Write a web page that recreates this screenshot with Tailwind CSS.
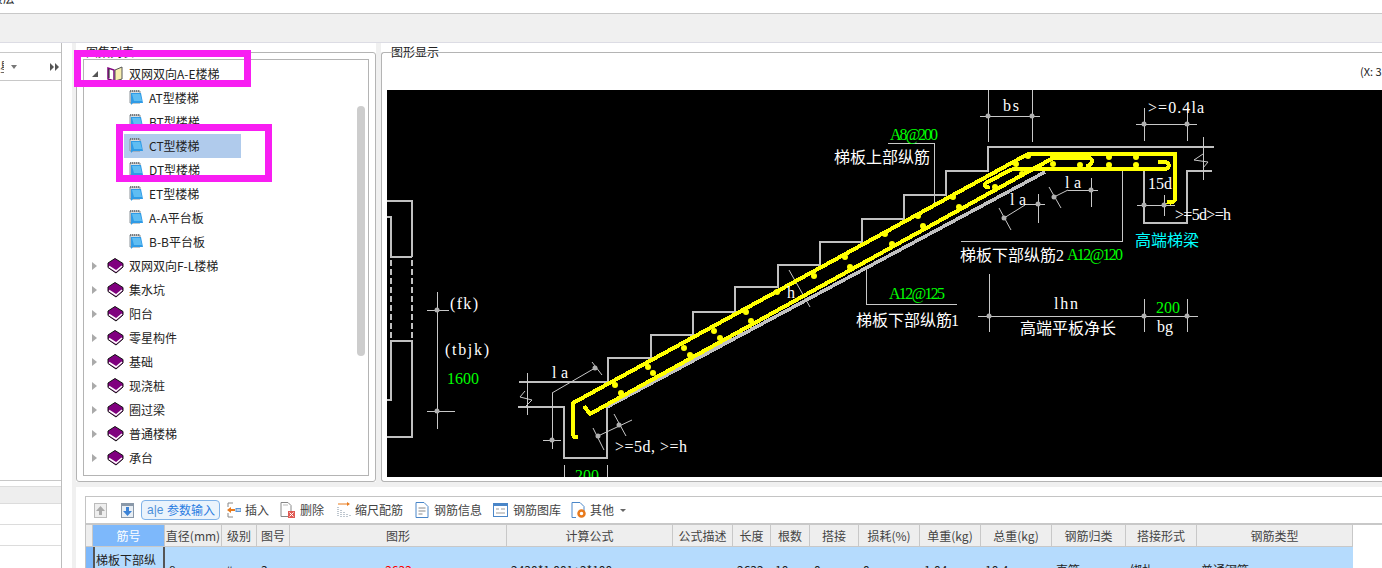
<!DOCTYPE html>
<html lang="zh-CN">
<head>
  <meta charset="UTF-8">
  <title>图集列表</title>
  <script src="https://cdn.jsdelivr.net/npm/@tailwindcss/browser@4"></script>
</head>
<body class="w-[1382px] h-[568px] overflow-hidden bg-white text-[12px] leading-none text-[#222] font-['Noto_Sans_CJK_SC','Liberation_Sans',sans-serif]">
  <svg class="hidden">
    <symbol id="book" viewBox="0 0 17 16">
      <path d="M1 5 8 .5 16 5.500V9l-7 6-8-5.500z" fill="#80007f" stroke="#111" stroke-width="1"/>
      <path d="M2 8.500 9 13l6-5" fill="none" stroke="#fff" stroke-width="1.500"/>
    </symbol>
    <symbol id="openbook" viewBox="0 0 17 16">
      <path d="M1 2v11l6 2V4z" fill="#fff" stroke="#80007f" stroke-width="1.500"/>
      <path d="M8 4v11l7-2V1z" fill="#f7eeb0" stroke="#555" stroke-width="1"/>
      <path d="M2 3v9" stroke="#111" stroke-width="1"/>
    </symbol>
    <symbol id="page" viewBox="0 0 15 16">
      <path d="M1 1h10v12H1z" fill="#d8dde0" stroke="#8a9298" stroke-width="1"/>
      <path d="M2 3h10l2 10H4l-2 2z" fill="#2f9be6"/>
      <path d="M3 4h8l2 7H5z" fill="#5fbdf2"/>
      <path d="M1 1h9" stroke="#666" stroke-dasharray="1 1" stroke-width="1.500"/>
    </symbol>
  </svg>

  <header class="h-[14px] overflow-hidden border-b border-[#c8c8c8] flex gap-[9px]">
    <span class="-ml-[9px] -mt-[8px] text-[12px] leading-[12px]">楼层</span>
    <span class="-mt-[8px] leading-[12px]">·</span>
  </header>
  <div class="h-[29px] bg-[#f0f0f0] border-b border-[#dcdce4]"></div>

  <div class="flex h-[525px]">
    <!-- left list -->
    <aside class="w-[62px] shrink-0 flex flex-col border-r border-[#bdbdbd] pt-[9px]">
      <div class="h-[28px] border-t border-[#c8c8c8] flex items-center text-[#444]">
        <span class="w-[4px] overflow-hidden">星</span>
        <span class="ml-[7px] w-0 h-0 border-x-[3px] border-x-transparent border-t-[4px] border-t-[#777]"></span>
        <span class="ml-[33px] w-0 h-0 border-y-[4px] border-y-transparent border-l-[4px] border-l-[#555]"></span>
        <span class="ml-[1px] w-0 h-0 border-y-[4px] border-y-transparent border-l-[4px] border-l-[#555]"></span>
      </div>
      <div class="h-[401px] border-t border-[#c8c8c8] border-b"></div>
      <div class="h-[5px]"></div>
      <div class="h-[17px] bg-[#eeeeee] border-t border-[#dcdcdc]"></div>
      <div class="h-[21px] border-t border-[#dcdcdc]"></div>
      <div class="h-[21px] border-t border-[#dcdcdc]"></div>
      <div class="flex-1 border-t border-[#dcdcdc]"></div>
    </aside>
    <div class="w-[10px] shrink-0"></div>

    <div class="flex-1 flex flex-col bg-[#f0f0f0] pl-[4px]">
      <div class="h-[439px] flex gap-[5px] shrink-0">
        <!-- tree group -->
        <section class="relative w-[300px] shrink-0 bg-white pt-[9px]">
          <span class="absolute left-[9px] top-[2px] px-[1px] bg-white text-[12px] leading-[14px]">图集列表</span>
          <div class="h-[430px] border border-[#b4b4b4] rounded-[3px] pl-[6px] pr-[6px] pt-[6px] pb-[6px]">
            <div class="relative h-[417px] border border-[#b4b4b4] overflow-hidden">
              <ul id="tree" class="pt-[2px]"></ul>
              <div class="absolute right-[3px] top-[46px] w-[8px] h-[250px] rounded-full bg-[#cdcdcd]"></div>
            </div>
          </div>
        </section>
        <!-- drawing group -->
        <section class="relative flex-1 bg-white pt-[9px]">
          <span class="absolute left-[9px] top-[2px] px-[1px] bg-white text-[12px] leading-[14px]">图形显示</span>
          <div class="relative h-[430px] border border-[#b4b4b4] border-r-0 rounded-l-[3px] pl-[5px] pt-[37px]">
            <span class="absolute left-[978px] top-[12px] text-[11px] leading-[13px]">(X: 3</span>
            <svg class="block font-['Liberation_Serif','Noto_Sans_CJK_SC',serif]" width="995" height="387" viewBox="387 90 995 387">
              <rect x="387" y="90" width="995" height="387" fill="#000"/>
              <g fill="none" stroke="#c0c0c0" stroke-width="2" shape-rendering="crispEdges">
                <path d="M387 201H412V257M387 217H391V257H412"/>
                <path d="M391 260V340M412 260V340" stroke-dasharray="6 3"/>
                <path d="M387 400H391V341H412V437H387"/>
                <path d="M519 382H608V358H651V335H693V312H735V287H778V265H820V242H862V219H904V195H946V171H988V147H1214"/>
                <path d="M518 407H564V458H607V407"/>
                <path d="M1212 171H1187V223H1144V171"/>
                <path d="M607 407 1045 172" stroke-width="3.500"/>
              </g>
              <g fill="none" stroke="#c8c8c8" stroke-width="1" shape-rendering="crispEdges">
                <path d="M437 292V429M427 310H449M427 411H455"/>
                <path d="M527 373V415M552 393V449M543 440H561"/>
                <path d="M564 465V477M607 465V477"/>
                <path d="M988 90V142M1032 90V142M980 116H1040"/>
                <path d="M888 143H934V205"/>
                <path d="M1025 204H1045M1038 194V223M1068 190H1098M1091 178V207"/>
                <path d="M1122 167V241H961"/>
                <path d="M1144 108V141M1187 108V141M1136 124H1197"/>
                <path d="M1203 137V180"/>
                <path d="M1137 205H1175M1164 195V216"/>
                <path d="M866 268V304H957"/>
                <path d="M978 316H1198M989 274V332M1144 299V332M1187 299V332"/>
              </g>
              <g fill="none" stroke="#c8c8c8" stroke-width="1">
                <path d="M552 393 595 368M592 362 602 375M525 391l-5 6 12 3-6 6M1203 154l-9 6 14 2-5 6"/>
                <path d="M598 436 632 420M614 414 626 436M593 428 604 450"/>
                <path d="M1004 218 1025 205M999 208 1011 230M1054 197 1068 190M1049 187 1061 208"/>
                <path d="M789 270 810 307M802 295 778 309"/>
              </g>
              <g fill="#b0b0b0">
                <circle cx="437" cy="310" r="2.500"/><circle cx="437" cy="411" r="2.500"/>
                <circle cx="552" cy="440" r="2.500"/><circle cx="595" cy="368" r="2.500"/>
                <circle cx="619" cy="425" r="2.500"/><circle cx="598" cy="436" r="2.500"/>
                <circle cx="988" cy="116" r="2.500"/><circle cx="1032" cy="116" r="2.500"/>
                <circle cx="1004" cy="218" r="2.500"/><circle cx="1038" cy="204" r="2.500"/>
                <circle cx="1054" cy="197" r="2.500"/><circle cx="1091" cy="190" r="2.500"/>
                <circle cx="1144" cy="124" r="2.500"/><circle cx="1187" cy="124" r="2.500"/>
                <circle cx="1144" cy="205" r="2.500"/><circle cx="1164" cy="205" r="2.500"/>
                <circle cx="989" cy="316" r="2.500"/><circle cx="1144" cy="316" r="2.500"/><circle cx="1187" cy="316" r="2.500"/>
              </g>
              <g fill="none" stroke="#ffff00" stroke-width="4" stroke-linejoin="round" shape-rendering="crispEdges">
                <path d="M578 437C574 438 573 436 573 433V403L1028 154H1175V198C1175 203 1170 203 1167 202"/>
                <path d="M584 406 590 414 1053 158H1088C1094 158 1093 165 1086 166"/>
                <path d="M1012 169H1165C1170 168 1170 163 1165 162H1158"/>
                <path d="M1012 169 986 183C983 187 987 188 990 187"/>
              </g>
              <g fill="#ffff00">
                <circle cx="615" cy="385" r="3"/><circle cx="621" cy="393" r="3"/><circle cx="648" cy="367" r="3"/><circle cx="653" cy="373" r="3"/>
                <circle cx="684" cy="348" r="3"/><circle cx="690" cy="355" r="3"/><circle cx="714" cy="331" r="3"/><circle cx="720" cy="338" r="3"/>
                <circle cx="746" cy="312" r="3"/><circle cx="751" cy="321" r="3"/><circle cx="777" cy="292" r="3"/><circle cx="814" cy="276" r="3"/>
                <circle cx="850" cy="267" r="3"/><circle cx="845" cy="257" r="3"/><circle cx="892" cy="244" r="3"/><circle cx="885" cy="234" r="3"/>
                <circle cx="923" cy="226" r="3"/><circle cx="918" cy="216" r="3"/><circle cx="959" cy="207" r="3"/><circle cx="953" cy="197" r="3"/>
                <circle cx="995" cy="187" r="3"/><circle cx="1022" cy="174" r="3"/><circle cx="1016" cy="164" r="3"/><circle cx="1028" cy="156" r="3"/>
                <circle cx="1053" cy="157" r="3"/><circle cx="1053" cy="164" r="3"/><circle cx="1080" cy="157" r="3"/><circle cx="1080" cy="165" r="3"/>
                <circle cx="1109" cy="157" r="3"/><circle cx="1109" cy="165" r="3"/><circle cx="1136" cy="157" r="3"/><circle cx="1136" cy="165" r="3"/>
              </g>
              <g data-cad fill="#ffffff" font-size="16">
                <text x="450" y="309" textLength="28">(fk)</text>
                <text x="445" y="355" textLength="44">(tbjk)</text>
                <text x="552" y="378">la</text>
                <text x="615" y="452">&gt;=5d, &gt;=h</text>
                <text x="1003" y="111">bs</text>
                <text x="1010" y="205">la</text>
                <text x="1065" y="188">la</text>
                <text x="1148" y="113">&gt;=0.4la</text>
                <text x="1148" y="189">15d</text>
                <text x="1175" y="220">&gt;=5d&gt;=h</text>
                <text x="787" y="298">h</text>
                <text x="1054" y="309">lhn</text>
                <text x="1157" y="332">bg</text>
                <text x="1056" y="261">2</text>
                <text x="951" y="326">1</text>
              </g>
              <g fill="#ffffff" font-size="16" font-family="Noto Sans CJK SC">
                <text x="834" y="163">梯板上部纵筋</text>
                <text x="960" y="261">梯板下部纵筋</text>
                <text x="856" y="326">梯板下部纵筋</text>
                <text x="1020" y="334">高端平板净长</text>
              </g>
              <text x="1135" y="246" fill="#00ffff" font-size="16" font-family="Noto Sans CJK SC">高端梯梁</text>
              <g data-cad fill="#00ff00" font-size="16">
                <text x="447" y="384">1600</text>
                <text x="890" y="140">A8@200</text>
                <text x="1067" y="260">A12@120</text>
                <text x="889" y="299">A12@125</text>
                <text x="1156" y="313">200</text>
                <text x="575" y="481">200</text>
              </g>
            </svg>
          </div>
        </section>
      </div>

      <div class="h-[5px] shrink-0"></div>

      <!-- rebar table -->
      <section class="flex-1 bg-white pl-[9px] pt-[9px] overflow-hidden">
        <div class="h-full border-l border-t border-[#c4c4c4] flex flex-col text-[#444]">
          <div class="h-[28px] shrink-0 border-b-2 border-[#c8c8c8] flex items-center text-[12px] whitespace-nowrap">
            <svg class="ml-[8px]" width="13" height="15" viewBox="0 0 13 15"><rect x="0.500" y="0.500" width="12" height="14" fill="#eee" stroke="#bbb"/><path d="M6.500 3 11 8H8v4H5V8H2z" fill="#aaa"/></svg>
            <svg class="ml-[14px]" width="13" height="15" viewBox="0 0 13 15"><rect x="0.500" y="0.500" width="12" height="14" fill="#e8eef4" stroke="#8a98a8"/><path d="M0 0h13v3H0z" fill="#8a98a8"/><path d="M5 4h3v4h3l-4.500 5L2 8h3z" fill="#3b82d6"/></svg>
            <div class="ml-[7px] w-[79px] h-[20px] shrink-0 flex items-center gap-[6px] border border-[#7fb2e8] rounded-[4px] bg-[#eaf3fc] pl-[5px] text-[#2a7de1]">
              <span class="w-[14px] font-['Liberation_Sans'] text-[12px] text-[#4a8fd8]">a|e</span><span>参数输入</span>
            </div>
            <svg class="ml-[7px]" width="14" height="16" viewBox="0 0 14 16"><path d="M1 1h5M1 1v4M1 11v4h5" fill="none" stroke="#888"/><path d="M0 8l4-3v2h4v2H4v2z" fill="#e87a1d"/><rect x="9" y="6.500" width="5" height="3" fill="#bcd6f0" stroke="#5b95d6"/></svg>
            <span class="ml-[4px]">插入</span>
            <svg class="ml-[11px]" width="15" height="16" viewBox="0 0 15 16"><path d="M1 .5h7l3 3v11H1z" fill="#fff" stroke="#888"/><path d="M3 3h5" stroke="#bbb"/><rect x="8" y="9" width="7" height="7" fill="#e05b55"/><path d="M9.500 10.500l4 4M13.500 10.500l-4 4" stroke="#fff"/></svg>
            <span class="ml-[5px]">删除</span>
            <svg class="ml-[13px]" width="14" height="16" viewBox="0 0 14 16"><path d="M1 2h9" stroke="#e87a1d"/><path d="M10 0l3 2-3 2z" fill="#e87a1d"/><path d="M1 5v10M4 8v7M7 10v5M10 12v3M13 13v2" stroke="#7f8f9f" stroke-dasharray="1 1"/></svg>
            <span class="ml-[4px]">缩尺配筋</span>
            <svg class="ml-[12px]" width="14" height="16" viewBox="0 0 14 16"><path d="M1 .5h8l4 4v11H1z" fill="#fff" stroke="#4a86c8"/><path d="M3.500 6h7M3.500 9h7M3.500 12h4" stroke="#888"/></svg>
            <span class="ml-[5px]">钢筋信息</span>
            <svg class="ml-[11px]" width="15" height="14" viewBox="0 0 15 14"><rect x="0.500" y="0.500" width="14" height="13" fill="#fff" stroke="#4a86c8"/><rect x="0" y="0" width="15" height="3" fill="#4a86c8"/><path d="M3 6h3M8 6h4M3 10h9" stroke="#999"/></svg>
            <span class="ml-[5px]">钢筋图库</span>
            <svg class="ml-[10px]" width="15" height="16" viewBox="0 0 15 16"><path d="M1 .5h8l4 4v5M5 15.500H1V.5" fill="#fff" stroke="#4a86c8"/><circle cx="10.500" cy="11.500" r="3" fill="none" stroke="#e87a1d" stroke-width="2.500"/></svg>
            <span class="ml-[4px]">其他</span>
            <span class="ml-[6px] w-0 h-0 border-x-[3px] border-x-transparent border-t-[3px] border-t-[#666]"></span>
          </div>
          <div id="head" class="grid grid-cols-[7px_72px_57px_35px_33px_217px_166px_60px_38px_39px_49px_61px_61px_71px_74px_71px_156px] w-[1267px] h-[22px] shrink-0 bg-[#eeeeee] border-b border-[#c8c8c8]"></div>
          <div id="row" class="grid grid-cols-[7px_72px_57px_35px_33px_217px_166px_60px_38px_39px_49px_61px_61px_71px_74px_71px_156px] w-[1267px] h-[42px] shrink-0 bg-[#b5dbfd] text-[#222]"></div>
        </div>
      </section>
    </div>
  </div>

  <!-- annotation boxes drawn over the screenshot -->
  <div class="absolute left-[74px] top-[50px] w-[177px] h-[37px] border-[7px] border-[#f81ef2]"></div>
  <div class="absolute left-[116px] top-[124px] w-[156px] h-[58px] border-[7px] border-[#f81ef2]"></div>

  <script>
    // CAD labels sit on a fixed 8px character cell
    document.querySelectorAll('[data-cad] text').forEach(t => {
      if (!t.hasAttribute('textLength')) t.setAttribute('textLength', t.textContent.length * 8);
    });

    const tree = [
      ['双网双向A-E楼梯', 'open'], ['AT型楼梯'], ['BT型楼梯'], ['CT型楼梯', 'sel'], ['DT型楼梯'], ['ET型楼梯'], ['A-A平台板'], ['B-B平台板'],
      ['双网双向F-L楼梯', 'root'], ['集水坑', 'root'], ['阳台', 'root'], ['零星构件', 'root'], ['基础', 'root'], ['现浇桩', 'root'], ['圈过梁', 'root'], ['普通楼梯', 'root'], ['承台', 'root']
    ];
    document.getElementById('tree').innerHTML = tree.map(([name, kind]) => {
      if (!kind || kind === 'sel') {
        const bg = kind === 'sel' ? 'bg-[#b0cbec]' : '';
        return `<li class="h-[24px] flex items-center pl-[40px]"><div class="w-[117px] h-[24px] flex items-center pl-[5px] ${bg}"><svg width="15" height="16"><use href="#page"/></svg><span class="ml-[5px]">${name}</span></div></li>`;
      }
      const arrow = kind === 'open'
        ? '<span class="w-[6px] h-[6px] bg-[#555] [clip-path:polygon(100%_0,100%_100%,0_100%)]"></span>'
        : '<span class="w-0 h-0 border-y-[4px] border-y-transparent border-l-[5px] border-l-[#aaa]"></span>';
      return `<li class="h-[24px] flex items-center pl-[8px]"><span class="w-[15px] flex">${arrow}</span><svg width="17" height="16"><use href="#${kind === 'open' ? 'openbook' : 'book'}"/></svg><span class="ml-[5px]">${name}</span></li>`;
    }).join('');

    const heads = ['', '筋号', '直径(mm)', '级别', '图号', '图形', '计算公式', '公式描述', '长度', '根数', '搭接', '损耗(%)', '单重(kg)', '总重(kg)', '钢筋归类', '搭接形式', '钢筋类型'];
    document.getElementById('head').innerHTML = heads.map((h, i) => {
      const tone = i === 1 ? 'bg-[#7db8fb] text-white' : '';
      return `<div class="flex items-center justify-center whitespace-nowrap border-r border-[#c8c8c8] ${tone}">${h}</div>`;
    }).join('');

    const cells = ['', '梯板下部纵筋1', '8', '#', '3', '2632', '2430*1.001+2*100', '', '2632', '10', '0', '0', '1.04', '10.4', '直筋', '绑扎', '普通钢筋'];
    document.getElementById('row').innerHTML = cells.map((c, i) => {
      if (i === 0) return '<div class="bg-[#7db8fb]"></div>';
      if (i === 1) return `<div class="border-x-2 border-[#555] px-[1px] pt-[6px] leading-[14px] break-all">${c}</div>`;
      if (i === 5) return `<div class="pt-[16px] text-center text-[#ff0000] leading-[14px]">${c}</div>`;
      return `<div class="pt-[16px] pl-[4px] leading-[14px] whitespace-nowrap">${c}</div>`;
    }).join('');
  </script>
</body>
</html>
